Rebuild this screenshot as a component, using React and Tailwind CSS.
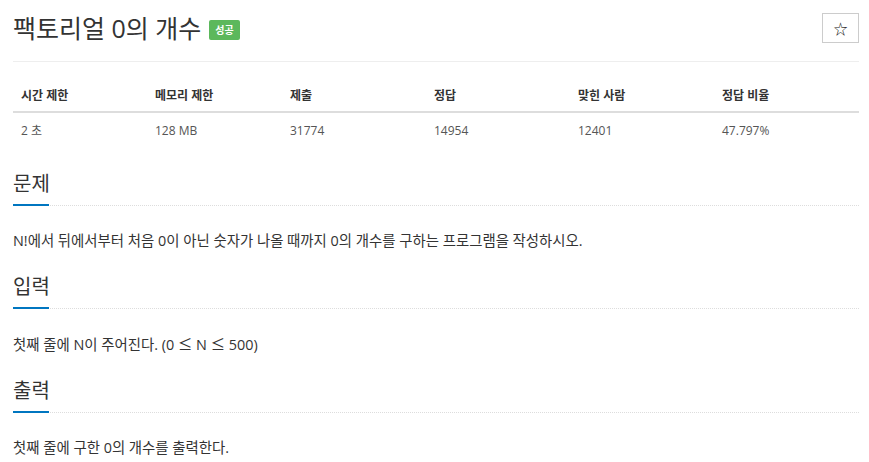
const FONT = { fontFamily: '"Open Sans", "Noto Sans CJK KR", sans-serif' }

const COLS = [
  { head: '시간 제한', value: '2 초', w: 'w-[134px]' },
  { head: '메모리 제한', value: '128 MB', w: 'w-[135px]' },
  { head: '제출', value: '31774', w: 'w-[144px]' },
  { head: '정답', value: '14954', w: 'w-[144px]' },
  { head: '맞힌 사람', value: '12401', w: 'w-[144px]' },
  { head: '정답 비율', value: '47.797%', w: 'w-[145px]' },
]

const Le = () => <span className="font-['Noto_Sans_CJK_KR']">≤</span>

const SECTIONS = [
  { title: '문제', body: 'N!에서 뒤에서부터 처음 0이 아닌 숫자가 나올 때까지 0의 개수를 구하는 프로그램을 작성하시오.' },
  {
    title: '입력',
    body: (
      <>
        첫째 줄에 N이 주어진다. (0 <Le /> N <Le /> 500)
      </>
    ),
  },
  { title: '출력', body: '첫째 줄에 구한 0의 개수를 출력한다.' },
]

function Section({ title, body }) {
  return (
    <section className="mt-[18px]">
      <div className="relative border-b border-dotted border-[#ddd]">
        <h2 className="text-[20px] leading-[28px] text-[#333] pb-[7px] pt-[4px]">{title}</h2>
        <div className="absolute left-0 bottom-[-1px] w-[36px] h-[2px] bg-[#0076c0]" />
      </div>
      <p className="mt-[25px] text-[14.4px] leading-[20px] text-[#333]">{body}</p>
    </section>
  )
}

export default function App() {
  return (
    <div className="bg-white min-h-[462px]" style={FONT}>
      <div className="ml-[13px] w-[846px]">
        {/* header */}
        <div className="flex items-center justify-between pt-[13px] pb-[18px] border-b border-[#eee]">
          <h1 className="flex items-center text-[25px] leading-[30px] text-[#333]">
            팩토리얼 0의 개수
            <span className="ml-[8px] mt-[3px] bg-[#5cb85c] text-white text-[10px] font-bold leading-[20px] px-[6px] rounded-[2px]">
              성공
            </span>
          </h1>
          <button className="w-[37px] h-[30px] border border-[#ccc] bg-white flex items-center justify-center text-[14px] text-[#222]">
            ☆
          </button>
        </div>

        {/* stats table */}
        <table className="mt-[18px] w-full border-collapse text-[12px] text-[#333]">
          <thead>
            <tr className="border-b-2 border-[#ddd]">
              {COLS.map((c) => (
                <th key={c.head} className={`${c.w} text-left font-bold px-[8px] h-[32px]`}>
                  {c.head}
                </th>
              ))}
            </tr>
          </thead>
          <tbody>
            <tr>
              {COLS.map((c) => (
                <td key={c.head} className="text-left px-[8px] h-[36px] text-[#555]">
                  {c.value}
                </td>
              ))}
            </tr>
          </tbody>
        </table>

        {SECTIONS.map((s) => (
          <Section key={s.title} {...s} />
        ))}
      </div>
    </div>
  )
}
